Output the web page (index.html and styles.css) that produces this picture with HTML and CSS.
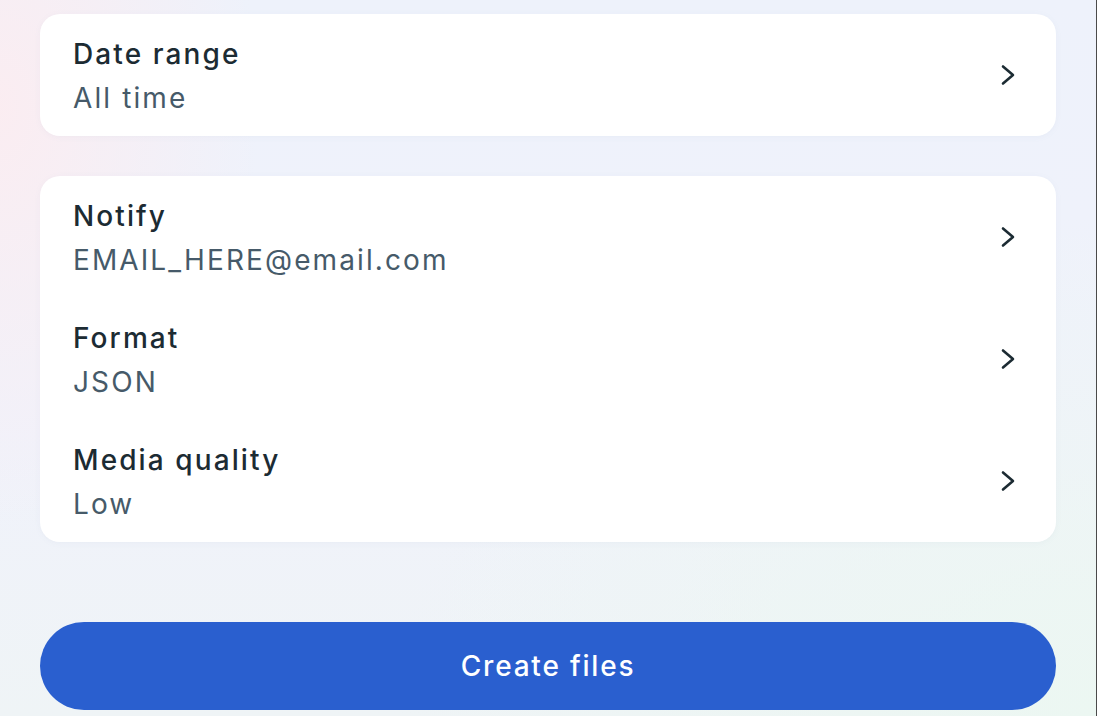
FILE: index.html
```html
<!DOCTYPE html>
<html>
<head>
<meta charset="utf-8">
<link rel="stylesheet" href="styles.css">
</head>
<body>
<div class="page">
  <div class="card">
    <div class="row">
      <div class="text">
        <div class="title">Date range</div>
        <div class="sub">All time</div>
      </div>
      <svg class="chev" viewBox="0 0 16 22" width="16" height="22"><path d="M3 2.5 L13 11 L3 19.5" fill="none" stroke="#1c2b33" stroke-width="2.6" stroke-linecap="round" stroke-linejoin="round"/></svg>
    </div>
  </div>
  <div class="card">
    <div class="row">
      <div class="text">
        <div class="title">Notify</div>
        <div class="sub">EMAIL_HERE@email.com</div>
      </div>
      <svg class="chev" viewBox="0 0 16 22" width="16" height="22"><path d="M3 2.5 L13 11 L3 19.5" fill="none" stroke="#1c2b33" stroke-width="2.6" stroke-linecap="round" stroke-linejoin="round"/></svg>
    </div>
    <div class="row">
      <div class="text">
        <div class="title">Format</div>
        <div class="sub">JSON</div>
      </div>
      <svg class="chev" viewBox="0 0 16 22" width="16" height="22"><path d="M3 2.5 L13 11 L3 19.5" fill="none" stroke="#1c2b33" stroke-width="2.6" stroke-linecap="round" stroke-linejoin="round"/></svg>
    </div>
    <div class="row">
      <div class="text">
        <div class="title">Media quality</div>
        <div class="sub">Low</div>
      </div>
      <svg class="chev" viewBox="0 0 16 22" width="16" height="22"><path d="M3 2.5 L13 11 L3 19.5" fill="none" stroke="#1c2b33" stroke-width="2.6" stroke-linecap="round" stroke-linejoin="round"/></svg>
    </div>
  </div>
  <div class="spacer"></div>
  <button class="btn">Create files</button>
</div>
</body>
</html>
```
FILE: styles.css
```css
html, body {
  margin: 0;
  padding: 0;
  height: 100%;
}
body {
  font-family: Inter, "Noto Sans", sans-serif;
  overflow: hidden;
}
.page {
  box-sizing: border-box;
  height: 716px;
  padding: 14px 40px 6px 40px;
  display: flex;
  flex-direction: column;
  gap: 40px;
  border-right: 1px solid #4a4a4a;
  background:
    radial-gradient(ellipse 260px 420px at 0% 15%, rgba(252, 236, 240, 0.9), rgba(252, 236, 240, 0) 100%),
    radial-gradient(ellipse 700px 500px at 100% 100%, rgba(236, 247, 242, 1), rgba(236, 247, 242, 0) 100%),
    linear-gradient(180deg, #eef2fb 0%, #f0f2fb 60%, #eff4f6 100%);
}
.card {
  background: #ffffff;
  border-radius: 20px;
  display: flex;
  flex-direction: column;
  box-shadow: 0 1px 6px rgba(120, 130, 170, 0.06);
}
.row {
  height: 122px;
  box-sizing: border-box;
  display: flex;
  align-items: center;
  justify-content: space-between;
  padding: 0 40px 0 33px;
}
.text {
  display: flex;
  flex-direction: column;
  margin-top: 2px;
}
.title {
  font-size: 28px;
  font-weight: 500;
  letter-spacing: 2.1px;
  color: #1c2b33;
  line-height: 44px;
}
.sub {
  font-size: 28px;
  font-weight: 400;
  letter-spacing: 2.1px;
  color: #465a69;
  line-height: 44px;
}
.chev {
  display: block;
}
.spacer {
  flex: 1;
}
.btn {
  height: 88px;
  border: none;
  border-radius: 44px;
  background: #2a5fcf;
  color: #ffffff;
  font-family: Inter, "Noto Sans", sans-serif;
  font-size: 28px;
  font-weight: 500;
  letter-spacing: 1.8px;
  width: 100%;
  flex-shrink: 0;
}
```
